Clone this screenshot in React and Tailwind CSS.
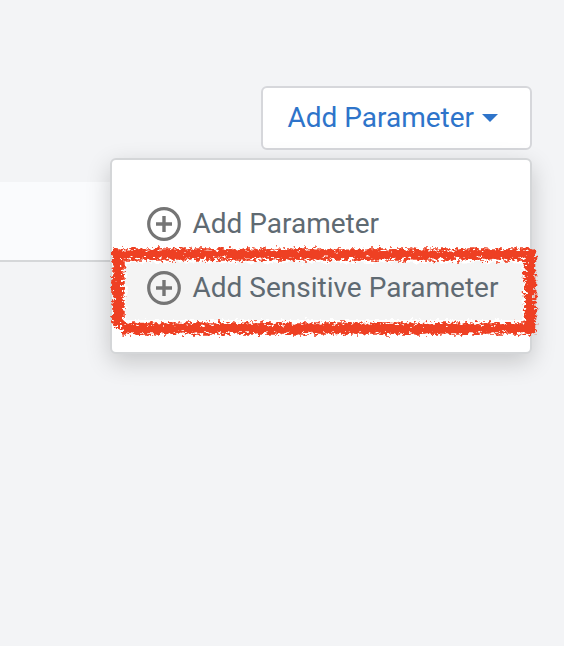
import React from "react";

function PlusCircle() {
  return (
    <svg className="h-[34px] w-[34px] shrink-0" viewBox="0 0 34 34" fill="none" stroke="#757575">
      <circle cx="17" cy="17" r="15.3" strokeWidth="3.2" />
      <path d="M17 9v16M9 17h16" strokeWidth="3.4" />
    </svg>
  );
}

function MenuItem({ label, active = false }) {
  return (
    <div className={`flex h-16 items-center pl-[35px] ${active ? "bg-[#f4f4f4]" : "bg-white"}`}>
      <PlusCircle />
      <span className="ml-[11.5px] whitespace-nowrap text-[28px] leading-8 text-[#5f6a72]">{label}</span>
    </div>
  );
}

function CrayonOutline() {
  return (
    <svg className="pointer-events-none absolute -left-[12px] top-[80px] h-[106px] w-[446px]" viewBox="0 0 446 106" fill="none">
      <defs>
        <filter id="crayon" filterUnits="userSpaceOnUse" x="0" y="0" width="446" height="106" colorInterpolationFilters="sRGB">
          <feTurbulence type="fractalNoise" baseFrequency="0.28" numOctaves="2" seed="7" result="noise" />
          <feDisplacementMap in="SourceGraphic" in2="noise" scale="9" xChannelSelector="R" yChannelSelector="G" result="rough" />
          <feTurbulence type="fractalNoise" baseFrequency="0.22 0.4" numOctaves="3" seed="12" />
          <feColorMatrix type="matrix" values="0 0 0 0 0  0 0 0 0 0  0 0 0 0 0  0 0 14 0 -5.4" result="grain" />
          <feComposite in="rough" in2="grain" operator="in" />
        </filter>
        <filter id="core" filterUnits="userSpaceOnUse" x="0" y="0" width="446" height="106" colorInterpolationFilters="sRGB">
          <feTurbulence type="fractalNoise" baseFrequency="0.2" numOctaves="3" seed="4" result="noise" />
          <feDisplacementMap in="SourceGraphic" in2="noise" scale="9" xChannelSelector="R" yChannelSelector="G" />
        </filter>
      </defs>
      <g filter="url(#core)" stroke="#fff">
        <path d="M18 17H432M18 85.5H432" strokeWidth="11" />
        <path d="M20 14V88M428 14V88" strokeWidth="11" />
      </g>
      <g filter="url(#crayon)" stroke="#ee4023">
        <path d="M12 14.5H436" strokeWidth="12.5" />
        <path d="M18.5 10V88" strokeWidth="12.5" />
        <path d="M21 88.5H436" strokeWidth="12.5" />
        <path d="M430 9V94" strokeWidth="12.5" />
      </g>
      <g filter="url(#core)" stroke="#ee4023">
        <path d="M13 14H435" strokeWidth="7" />
        <path d="M18 11V86" strokeWidth="8" />
        <path d="M23 88.5H435" strokeWidth="7.5" />
        <path d="M430.5 11V92" strokeWidth="7.5" />
      </g>
    </svg>
  );
}

export default function App() {
  return (
    <main className="h-[646px] w-[564px] overflow-hidden bg-[#f3f4f6] pt-[86px] font-[Roboto,sans-serif]">
      <header className="flex h-24 items-start justify-end pr-8">
        <div className="relative">
          <button className="flex h-16 w-[271px] items-center rounded-md border-2 border-[#d6d7db] bg-white pl-[24.5px] text-[28px] leading-8 text-[#2e74ca]">
            <span className="whitespace-nowrap">Add Parameter</span>
            <svg className="ml-[7.5px] h-2 w-4" viewBox="0 0 16 8" fill="currentColor">
              <path d="M0 0h16L8 8z" />
            </svg>
          </button>
          <div className="absolute right-0 top-[72px] z-10 h-[196px] w-[422px] rounded-md border-2 border-[#d4d6d8] bg-white pt-8 shadow-[0_8px_24px_rgba(0,0,0,0.19)]">
            <MenuItem label="Add Parameter" />
            <MenuItem label="Add Sensitive Parameter" active />
            <CrayonOutline />
          </div>
        </div>
      </header>
      <div className="h-20 w-[300px] border-b-2 border-[#d5d7d9] bg-[#fafbfd]" />
    </main>
  );
}
